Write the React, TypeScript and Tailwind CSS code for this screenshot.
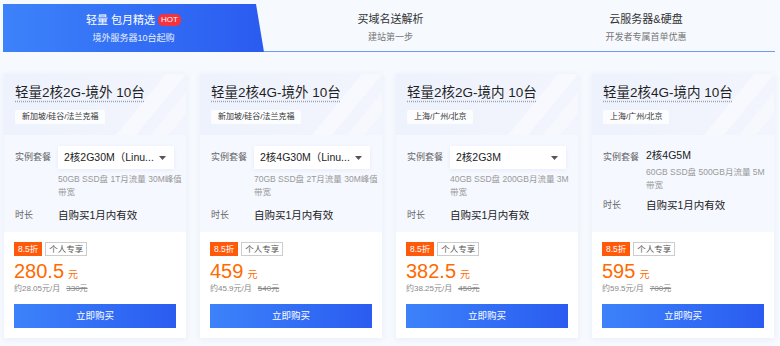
type Plan = {
  title: string;
  region: string;
  spec: string;
  select: boolean;
  desc: string;
  descTail: string;
  price: string;
  monthly: string;
  original: string;
};

const plans: Plan[] = [
  {
    title: "轻量2核2G-境外 10台",
    region: "新加坡/硅谷/法兰克福",
    spec: "2核2G30M（Linu...",
    select: true,
    desc: "50GB SSD盘 1T月流量 30M峰值",
    descTail: "带宽",
    price: "280.5",
    monthly: "约28.05元/月",
    original: "330元",
  },
  {
    title: "轻量2核4G-境外 10台",
    region: "新加坡/硅谷/法兰克福",
    spec: "2核4G30M（Linu...",
    select: true,
    desc: "70GB SSD盘 2T月流量 30M峰值",
    descTail: "带宽",
    price: "459",
    monthly: "约45.9元/月",
    original: "540元",
  },
  {
    title: "轻量2核2G-境内 10台",
    region: "上海/广州/北京",
    spec: "2核2G3M",
    select: true,
    desc: "40GB SSD盘 200GB月流量 3M",
    descTail: "带宽",
    price: "382.5",
    monthly: "约38.25元/月",
    original: "450元",
  },
  {
    title: "轻量2核4G-境内 10台",
    region: "上海/广州/北京",
    spec: "2核4G5M",
    select: false,
    desc: "60GB SSD盘 500GB月流量 5M",
    descTail: "带宽",
    price: "595",
    monthly: "约59.5元/月",
    original: "700元",
  },
];

function Tabs() {
  return (
    <div className="flex pl-[3px] pt-[4px] h-[52px]">
      <div className="w-[261px] h-[48px] bg-gradient-to-r from-[#3d82fa] to-[#2b5bf0] [clip-path:polygon(0_0,calc(100%-8px)_0,100%_100%,0_100%)] flex flex-col items-center justify-center text-white">
        <div className="flex items-center gap-[3px] text-[11px] leading-[16px]">
          <span>轻量 包月精选</span>
          <span className="bg-[#f4333f] rounded-[5px] px-[3px] text-[8px] leading-[12px]">HOT</span>
        </div>
        <div className="text-[9px] leading-[14px] mt-[3px] text-white/90">境外服务器10台起购</div>
      </div>
      <div className="w-[253px] h-[48px] border-b border-[#6f9af3] flex flex-col items-center justify-center">
        <div className="text-[11px] leading-[16px] text-[#333]">买域名送解析</div>
        <div className="text-[9px] leading-[14px] mt-[3px] text-[#777]">建站第一步</div>
      </div>
      <div className="w-[258px] h-[48px] border-b border-[#6f9af3] flex flex-col items-center justify-center">
        <div className="text-[11px] leading-[16px] text-[#333]">云服务器&amp;硬盘</div>
        <div className="text-[9px] leading-[14px] mt-[3px] text-[#777]">开发者专属首单优惠</div>
      </div>
    </div>
  );
}

function Card({ plan }: { plan: Plan }) {
  return (
    <div className="flex flex-col bg-white shadow-[0_1px_6px_rgba(60,90,160,0.08)]">
      <div className="relative h-[61px] px-[11px] pt-[10px] bg-gradient-to-r from-[#eef2fc] to-[#f2f5fd] overflow-hidden">
        <svg className="absolute right-0 top-0" width="90" height="61" viewBox="0 0 90 61">
          <path d="M20 61 L70 0 L90 0 L40 61 Z" fill="#ffffff" opacity="0.45" />
          <path d="M55 61 L90 18 L90 40 L72 61 Z" fill="#ffffff" opacity="0.35" />
        </svg>
        <div className="relative text-[13.5px] leading-[18px] text-[#1f1f1f]">
          <span className="underline decoration-dotted decoration-[#9aa3b5] underline-offset-[4px]">{plan.title}</span>
        </div>
        <div className="relative mt-[7px] inline-block bg-white/80 rounded-[2px] px-[7px] text-[8px] leading-[14px] text-[#333]">
          {plan.region}
        </div>
      </div>
      <div className="h-[97px] bg-[#f5f8ff] px-[11px] pt-[11px]">
        <div className="flex">
          <div className="w-[43px] shrink-0 text-[9px] leading-[13px] text-[#666] pt-[5px]">实例套餐</div>
          {plan.select ? (
            <div className="w-[116px] h-[23px] bg-white shadow-[0_1px_4px_rgba(60,90,160,0.08)] flex items-center justify-between pl-[6px] pr-[8px]">
              <span className="text-[10.5px] text-[#222] whitespace-nowrap">{plan.spec}</span>
              <svg width="7" height="4" viewBox="0 0 7 4">
                <path d="M0 0 H7 L3.5 4 Z" fill="#555" />
              </svg>
            </div>
          ) : (
            <div className="h-[16px] flex items-center text-[10.5px] text-[#222] pt-[3px]">{plan.spec}</div>
          )}
        </div>
        <div className={plan.select ? "pl-[43px] mt-[4px]" : "pl-[43px] mt-[2px]"}>
          <div className="text-[8.5px] leading-[13px] text-[#999] whitespace-nowrap">{plan.desc}</div>
          <div className="text-[8.5px] leading-[13px] text-[#999]">{plan.descTail}</div>
        </div>
        <div className={plan.select ? "flex items-center mt-[9px]" : "flex items-center mt-[6px]"}>
          <div className="w-[43px] shrink-0 text-[9px] leading-[13px] text-[#666]">时长</div>
          <div className="text-[10.5px] leading-[14px] text-[#222]">自购买1月内有效</div>
        </div>
      </div>
      <div className="h-[106px] bg-white px-[10px] pt-[10px]">
        <div className="flex gap-[3px]">
          <span className="bg-[#ff5a0a] text-white text-[8.5px] leading-[14px] px-[4px]">8.5折</span>
          <span className="border border-[#ccc] text-[#555] text-[8.5px] leading-[12px] px-[3px]">个人专享</span>
        </div>
        <div className="flex items-baseline text-[#ff6a00] mt-[3px]">
          <span className="text-[20px] leading-[24px]">{plan.price}</span>
          <span className="text-[10px] ml-[4px]">元</span>
        </div>
        <div className="flex gap-[6px] text-[8px] leading-[12px] text-[#888]">
          <span>{plan.monthly}</span>
          <span className="line-through">{plan.original}</span>
        </div>
        <div className="mt-[9px] h-[24px] bg-gradient-to-r from-[#3d82fa] to-[#2b5bf0] flex items-center justify-center text-white text-[9.5px]">
          立即购买
        </div>
      </div>
    </div>
  );
}

export default function App() {
  return (
    <div className="w-[780px] h-[346px] bg-[#f6f9fe] overflow-hidden font-['Liberation_Sans','Noto_Sans_CJK_SC',sans-serif]">
      <Tabs />
      <div className="grid grid-cols-4 gap-[14px] w-[770px] ml-[4px] mt-[22px]">
        {plans.map((plan) => (
          <Card key={plan.title} plan={plan} />
        ))}
      </div>
    </div>
  );
}
